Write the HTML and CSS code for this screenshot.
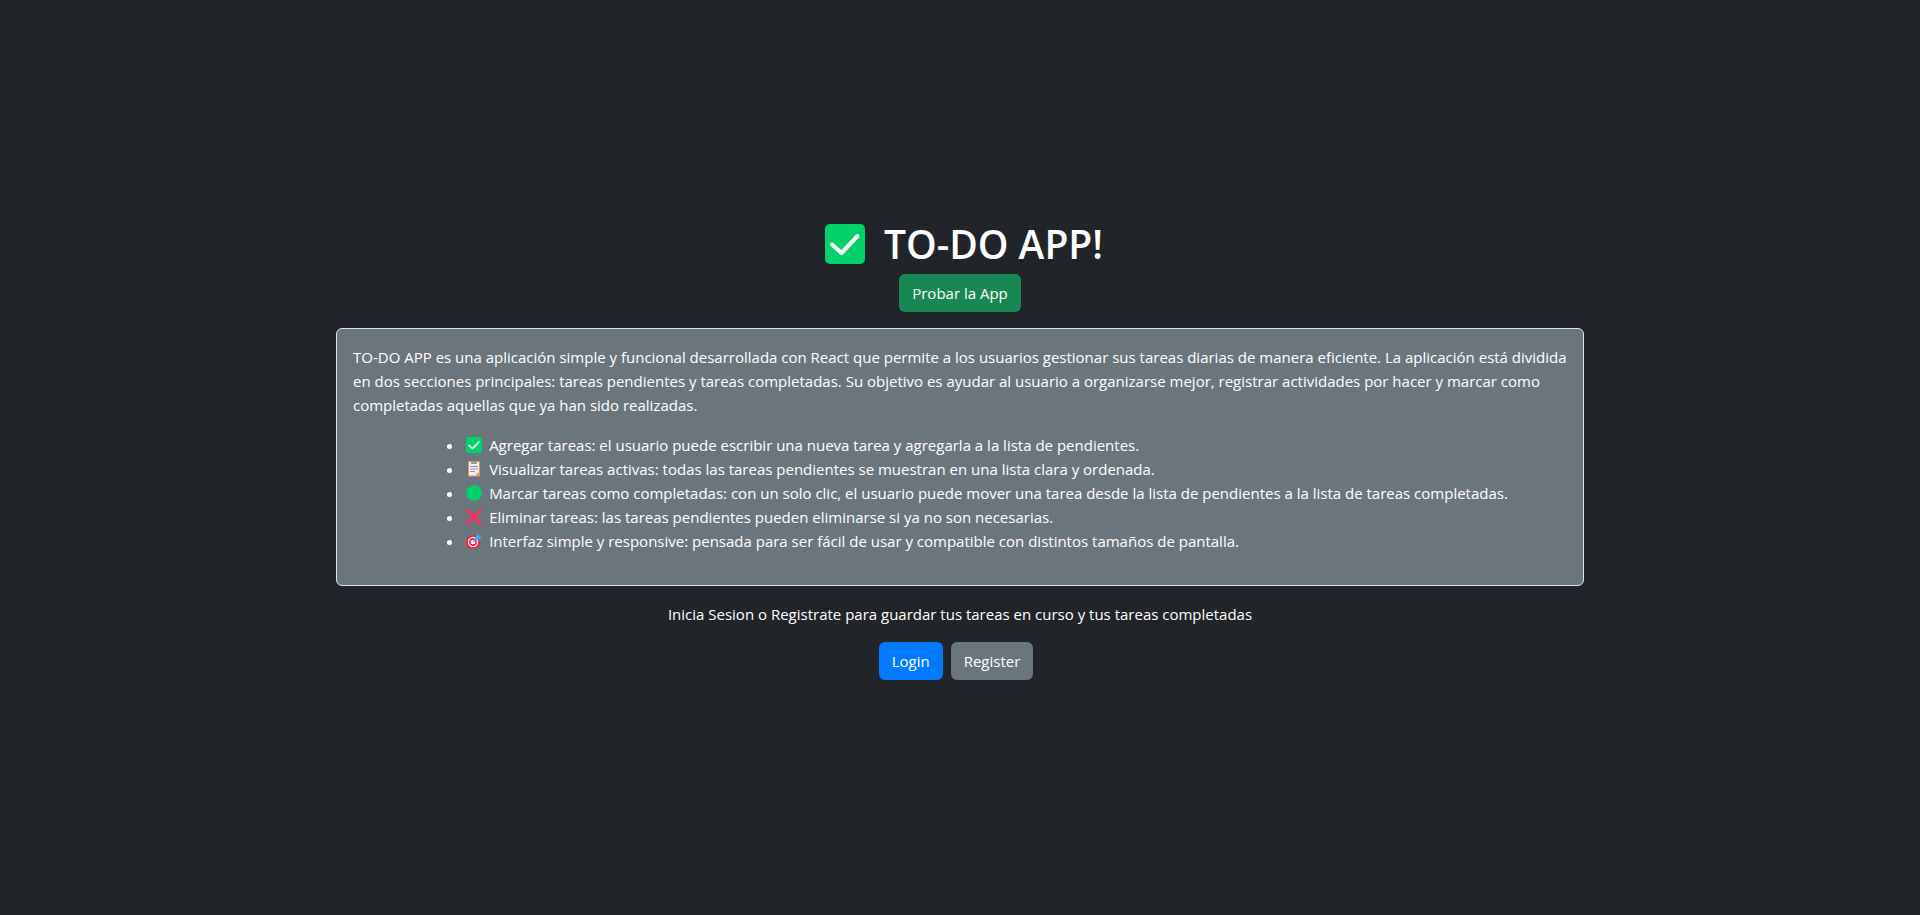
FILE: index.html
```
<!DOCTYPE html>
<html lang="es">
<head>
<meta charset="utf-8">
<meta name="viewport" content="width=device-width, initial-scale=1">
<title>TO-DO APP!</title>
<link rel="stylesheet" href="styles.css">
</head>
<body>
<svg class="sprite" aria-hidden="true">
  <symbol id="check" viewBox="0 0 40 40">
    <rect width="40" height="40" rx="5" fill="#00d26a"/>
    <path d="M7 20.500L16.500 29L32.500 12" fill="none" stroke="#f4f4f4" stroke-width="4.200" stroke-linecap="round" stroke-linejoin="round"/>
  </symbol>
  <symbol id="clipboard" viewBox="0 0 16 16">
    <rect x="2" y="0" width="12" height="15.500" rx=".5" fill="#e19747"/>
    <path d="M3 1h10v10.500L10 14.500H3z" fill="#f3eef8"/>
    <path d="M10 14.500v-3h3z" fill="#cdc4d6"/>
    <path d="M5 0h6v3H5z" fill="#9b9b9b"/>
    <path d="M4 5.500h8M4 8h8M4 10.500h5" stroke="#998ea4" stroke-width="1"/>
  </symbol>
  <symbol id="circle" viewBox="0 0 16 16"><circle cx="8" cy="8" r="7.800" fill="#00d26a"/></symbol>
  <symbol id="cross" viewBox="0 0 16 16">
    <path d="M1.600 1.600L14.400 14.400M14.400 1.600L1.600 14.400" stroke="#f92f60" stroke-width="3.400" stroke-linecap="round"/>
  </symbol>
  <symbol id="target" viewBox="0 0 16 16">
    <circle cx="7" cy="9" r="7" fill="#f8203f"/>
    <circle cx="7" cy="9" r="5.200" fill="#fff"/>
    <circle cx="7" cy="9" r="3.900" fill="#f8203f"/>
    <circle cx="7" cy="9" r="2.300" fill="#fff"/>
    <path d="M7 9L12 4" stroke="#46a4fb" stroke-width="1.500"/>
    <path d="M9.500 4L12 .5l1 2.500 3 1-3.500 3H9.500z" fill="#26b0f5"/>
  </symbol>
</svg>
<main class="home">
  <h1 class="title"><svg class="title-icon" aria-hidden="true"><use href="#check"/></svg>TO-DO APP!</h1>
  <button class="btn btn-success" type="button">Probar la App</button>
  <section class="card">
    <p class="intro">TO-DO APP es una aplicación simple y funcional desarrollada con React que permite a los usuarios gestionar sus tareas diarias de manera eficiente. La aplicación está dividida en dos secciones principales: tareas pendientes y tareas completadas. Su objetivo es ayudar al usuario a organizarse mejor, registrar actividades por hacer y marcar como completadas aquellas que ya han sido realizadas.</p>
    <ul class="features">
      <li><svg class="icon" aria-hidden="true"><use href="#check"/></svg>Agregar tareas: el usuario puede escribir una nueva tarea y agregarla a la lista de pendientes.</li>
      <li><svg class="icon" aria-hidden="true"><use href="#clipboard"/></svg>Visualizar tareas activas: todas las tareas pendientes se muestran en una lista clara y ordenada.</li>
      <li><svg class="icon" aria-hidden="true"><use href="#circle"/></svg>Marcar tareas como completadas: con un solo clic, el usuario puede mover una tarea desde la lista de pendientes a la lista de tareas completadas.</li>
      <li><svg class="icon" aria-hidden="true"><use href="#cross"/></svg>Eliminar tareas: las tareas pendientes pueden eliminarse si ya no son necesarias.</li>
      <li><svg class="icon" aria-hidden="true"><use href="#target"/></svg>Interfaz simple y responsive: pensada para ser fácil de usar y compatible con distintos tamaños de pantalla.</li>
    </ul>
  </section>
  <p class="hint">Inicia Sesion o Registrate para guardar tus tareas en curso y tus tareas completadas</p>
  <div class="actions">
    <button class="btn btn-primary" type="button">Login</button>
    <button class="btn btn-secondary" type="button">Register</button>
  </div>
</main>
</body>
</html>
```
FILE: styles.css
```
* {
  box-sizing: border-box;
}

body {
  margin: 0;
  background: #212529;
  color: #fff;
  font-family: "Open Sans", "Noto Sans", sans-serif;
  font-size: 15px;
  line-height: 24px;
}

.sprite {
  position: absolute;
  width: 0;
  height: 0;
}

.home {
  display: flex;
  flex-direction: column;
  align-items: center;
  justify-content: center;
  min-height: 100vh;
  padding-bottom: 16px;
}

.title {
  display: flex;
  align-items: center;
  gap: 19px;
  margin: 0 0 6px;
  padding-left: 8px;
  font-size: 39px;
  font-weight: 600;
  line-height: 48px;
}

.title-icon {
  width: 40px;
  height: 40px;
}

.btn {
  padding: 6px 12px;
  border: 1px solid transparent;
  border-radius: 6px;
  color: #fff;
  font: inherit;
  cursor: pointer;
}

.btn-success {
  background: #198754;
}

.btn-primary {
  background: #007bff;
}

.btn-secondary {
  background: #6b767c;
}

.card {
  width: 65%;
  margin: 16px 0;
  padding: 16px;
  border: 1px solid #dee2e6;
  border-radius: 6px;
  background: #6b767c;
}

.intro {
  margin: 0 0 16px;
}

.features {
  width: fit-content;
  margin: 0 auto 16px;
  padding-left: 52px;
}

.icon {
  width: 16px;
  height: 16px;
  margin: 0 7px 0 2px;
  vertical-align: -2px;
}

.hint {
  margin: 0 0 16px;
}

.actions {
  display: flex;
  gap: 8px;
  padding-right: 8px;
}
```
